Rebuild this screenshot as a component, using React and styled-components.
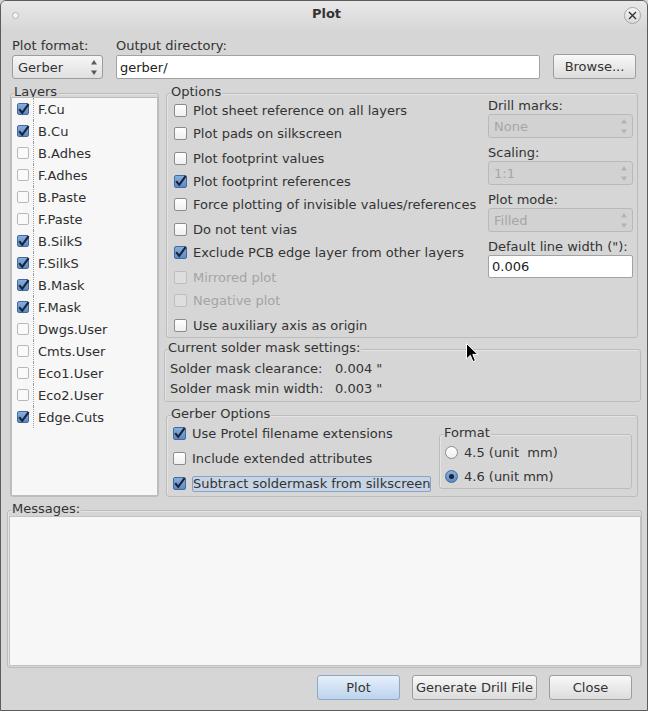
import React from 'react';
import styled, { createGlobalStyle, css } from 'styled-components';

const Global = createGlobalStyle`
  html, body { margin: 0; padding: 0; background: #d6d6d6; }
  body { font-family: "DejaVu Sans", "Noto Sans", sans-serif; font-size: 13px; color: #333; }
  * { box-sizing: border-box; }
`;

const Window = styled.div`
  position: relative;
  width: 648px;
  height: 711px;
  border: 1px solid #5c5c5c;
  border-radius: 6px 6px 0 0;
  background: #d6d6d6;
  display: flex;
  flex-direction: column;
  overflow: hidden;
`;

const TitleBar = styled.div`
  flex: none;
  height: 27px;
  display: grid;
  grid-template-columns: 1fr auto 1fr;
  align-items: center;
  padding: 0 6px 0 11px;
  background: linear-gradient(#e8e8e8, #d8d8d8);
`;

const WinDot = styled.span`
  width: 7px;
  height: 7px;
  border-radius: 50%;
  background: #f4f4f4;
  border: 1px solid #b4b4b4;
  margin-top: 2px;
`;

const Title = styled.div`
  font-weight: bold;
  font-size: 13px;
  color: #333;
  margin-top: -2px;
`;

const CloseBtn = styled.div`
  justify-self: end;
  width: 17px;
  height: 17px;
  border-radius: 50%;
  border: 1px solid #a6a6a6;
  background: linear-gradient(#f4f4f4, #dadada);
  display: flex;
  align-items: center;
  justify-content: center;
  margin-top: 1px;
`;

const Body = styled.div`
  flex: 1;
  display: flex;
  flex-direction: column;
  padding: 10px 5px 0 6px;
`;

const TopRow = styled.div`
  display: flex;
  align-items: flex-end;
  gap: 13px;
  margin-left: 5px;
`;

const Field = styled.div`
  display: flex;
  flex-direction: column;
  width: ${p => p.$w}px;
`;

const FieldLabel = styled.div`
  line-height: 15px;
  height: 15px;
  white-space: nowrap;
  margin-bottom: ${p => p.$mb ?? 2}px;
`;

const SelectBox = styled.div`
  height: 24px;
  display: flex;
  align-items: center;
  justify-content: space-between;
  padding: 0 5px 0 5px;
  border-radius: 3px;
  ${p => p.$disabled ? css`
    border: 1px solid #b9b9b9;
    background: #d2d2d2;
    color: #a6a6a6;
  ` : css`
    border: 1px solid #9c9c9c;
    background: linear-gradient(#f6f6f6, #e0e0e0);
    color: #333;
  `}
`;

const TextInput = styled.div`
  height: ${p => p.$h || 24}px;
  display: flex;
  align-items: center;
  padding-left: 3px;
  background: #fff;
  border: 1px solid #a2a2a2;
  border-radius: 2px;
  color: #222;
`;

const Button = styled.div`
  width: ${p => p.$w}px;
  height: 25px;
  display: flex;
  align-items: center;
  justify-content: center;
  border-radius: 3px;
  white-space: nowrap;
  color: #333;
  ${p => p.$primary ? css`
    border: 1px solid #8ea8c6;
    background: linear-gradient(#e6f0fb, #bcd3ec);
  ` : css`
    border: 1px solid #9d9d9d;
    background: linear-gradient(#f8f8f8, #dcdcdc);
  `}
`;

const MainRow = styled.div`
  display: flex;
  gap: 5px;
  margin-top: 14px;
  margin-left: 3px;
`;

const Group = styled.div`
  display: flex;
  flex-direction: column;
  border: 1px solid #bcbcbc;
  border-radius: 3px;
  box-shadow: inset 1px 1px 0 rgba(255,255,255,0.35);
`;

const GroupTitle = styled.div`
  align-self: flex-start;
  margin: -10px 0 0 ${p => p.$ml ?? 3}px;
  padding: 0 1px 0 0;
  line-height: 15px;
  height: 15px;
  background: #d6d6d6;
  white-space: nowrap;
`;

const LayersGroup = styled(Group)`
  width: 149px;
  padding: 0;
`;

const LayerList = styled.div`
  flex: 1;
  margin-top: -2px;
  background: #f7f7f7;
  border: 1px solid #bdbdbd;
  display: flex;
  flex-direction: column;
`;

const LayerRow = styled.div`
  height: 22px;
  display: flex;
  align-items: center;
  padding-left: 5px;
`;

const LayerText = styled.div`
  align-self: stretch;
  display: flex;
  align-items: center;
  margin-left: 4px;
  padding-left: 4px;
  border-left: 1px dotted #9c9c9c;
  color: #2e2e2e;
`;

const RightCol = styled.div`
  flex: 1;
  display: flex;
  flex-direction: column;
`;

const OptionsGroup = styled(Group)`
  margin: 0 4px 0 2px;
`;

const OptionsBody = styled.div`
  display: flex;
  justify-content: space-between;
  padding: 0 4px 0 7px;
`;

const CheckCol = styled.div`
  display: flex;
  flex-direction: column;
`;

const CheckRow = styled.div`
  height: ${p => p.$h || 23}px;
  margin-top: ${p => p.$mt || 0}px;
  display: flex;
  align-items: center;
  gap: 6px;
  white-space: nowrap;
  color: ${p => p.$disabled ? '#a4a4a4' : '#333'};
`;

const SettingsCol = styled.div`
  width: 145px;
  display: flex;
  flex-direction: column;
  margin-top: -1px;
`;

const SettingBlock = styled.div`
  display: flex;
  flex-direction: column;
  margin-top: ${p => p.$mt || 0}px;
`;

const Box = styled.span`
  flex: none;
  width: ${p => p.$size}px;
  height: ${p => p.$size}px;
  border-radius: 2px;
  display: inline-flex;
  align-items: center;
  justify-content: center;
  ${p => p.$checked ? css`
    border: 1px solid #44699a;
    background: linear-gradient(#86aedf, #5a8bca);
  ` : p.$disabled ? css`
    border: 1px solid #bdbdbd;
    background: #dedede;
  ` : p.$light ? css`
    border: 1px solid #b8b8b8;
    background: #fafafa;
  ` : css`
    border: 1px solid #8c8c8c;
    background: linear-gradient(#ffffff, #efefef);
  `}
  svg { overflow: visible; }
`;

const RadioDot = styled.span`
  flex: none;
  width: 13px;
  height: 13px;
  border-radius: 50%;
  display: inline-flex;
  align-items: center;
  justify-content: center;
  ${p => p.$checked ? css`
    border: 1px solid #44699a;
    background: linear-gradient(#86aedf, #5a8bca);
  ` : css`
    border: 1px solid #8c8c8c;
    background: linear-gradient(#ffffff, #efefef);
  `}
  &::after {
    content: '';
    display: ${p => p.$checked ? 'block' : 'none'};
    width: 5px;
    height: 5px;
    border-radius: 50%;
    background: #1d2530;
  }
`;

const FocusLabel = styled.span`
  background: #c6d4e4;
  border: 1px solid #88a3c5;
  border-radius: 2px;
  line-height: 14px;
`;

const SolderGroup = styled(Group)`
  margin: 11px 1px 0 0;
  padding-bottom: 3px;
`;

const SolderRow = styled.div`
  height: 20px;
  display: flex;
  align-items: center;
  padding-left: 5px;
  margin-top: ${p => p.$mt || 0}px;
`;

const SolderKey = styled.span`
  width: 165px;
`;

const GerberGroup = styled(Group)`
  margin: 13px 4px 0 2px;
`;

const GerberBody = styled.div`
  display: flex;
  justify-content: space-between;
  align-items: flex-start;
  padding: 0 5px 0 6px;
`;

const FormatGroup = styled(Group)`
  width: 193px;
  margin-top: 13px;
  padding-left: 5px;
`;

const RadioRow = styled.div`
  height: 24px;
  display: flex;
  align-items: center;
  gap: 6px;
  white-space: pre;
`;

const MessagesGroup = styled(Group)`
  margin-top: 13px;
  padding: 0 0 1px 1px;
`;

const MessagesArea = styled.div`
  height: 150px;
  background: #f7f7f7;
  border: 1px solid #c2c2c2;
`;

const ButtonRow = styled.div`
  display: flex;
  justify-content: flex-end;
  gap: 12px;
  margin-top: 7px;
  padding-right: 10px;
`;

const Cursor = styled.svg`
  position: absolute;
  left: 465px;
  top: 342px;
`;

const Check = () => (
  <svg width="11" height="11" viewBox="0 0 11 11">
    <path d="M1.2 5.2 L4.2 8.8 L10.6 0.2" fill="none" stroke="#1c2431" strokeWidth="2.1" />
  </svg>
);

const Arrows = ({ disabled }) => (
  <svg width="6" height="15" viewBox="0 0 6 15">
    <polygon points="0,4.5 3,0 6,4.5" fill={disabled ? '#b3b3b3' : '#5a5a5a'} />
    <polygon points="0,10.5 3,15 6,10.5" fill={disabled ? '#b3b3b3' : '#5a5a5a'} />
  </svg>
);

const CheckBox = ({ checked, disabled, size = 13, light }) => (
  <Box $size={size} $checked={checked} $disabled={disabled} $light={light}>
    {checked && <Check />}
  </Box>
);

const layers = [
  ['F.Cu', true], ['B.Cu', true], ['B.Adhes', false], ['F.Adhes', false],
  ['B.Paste', false], ['F.Paste', false], ['B.SilkS', true], ['F.SilkS', true],
  ['B.Mask', true], ['F.Mask', true], ['Dwgs.User', false], ['Cmts.User', false],
  ['Eco1.User', false], ['Eco2.User', false], ['Edge.Cuts', true],
];

const options = [
  { label: 'Plot sheet reference on all layers' },
  { label: 'Plot pads on silkscreen' },
  { label: 'Plot footprint values', mt: 2 },
  { label: 'Plot footprint references', checked: true },
  { label: 'Force plotting of invisible values/references' },
  { label: 'Do not tent vias', mt: 2 },
  { label: 'Exclude PCB edge layer from other layers', checked: true },
  { label: 'Mirrored plot', disabled: true, mt: 2 },
  { label: 'Negative plot', disabled: true },
  { label: 'Use auxiliary axis as origin', mt: 2 },
];

const settings = [
  { label: 'Drill marks:', value: 'None' },
  { label: 'Scaling:', value: '1:1' },
  { label: 'Plot mode:', value: 'Filled' },
];

export default function App() {
  return (
    <>
      <Global />
      <Window>
        <TitleBar>
          <WinDot />
          <Title>Plot</Title>
          <CloseBtn>
            <svg width="9" height="9" viewBox="0 0 9 9">
              <path d="M1 1 L8 8 M8 1 L1 8" stroke="#333" strokeWidth="1.4" />
            </svg>
          </CloseBtn>
        </TitleBar>
        <Body>
          <TopRow>
            <Field $w={91}>
              <FieldLabel>Plot format:</FieldLabel>
              <SelectBox>
                <span>Gerber</span>
                <Arrows />
              </SelectBox>
            </Field>
            <Field $w={424}>
              <FieldLabel>Output directory:</FieldLabel>
              <TextInput>gerber/</TextInput>
            </Field>
            <Button $w={83}>Browse...</Button>
          </TopRow>

          <MainRow>
            <LayersGroup>
              <GroupTitle>Layers</GroupTitle>
              <LayerList>
                {layers.map(([name, on]) => (
                  <LayerRow key={name}>
                    <CheckBox checked={on} size={12} light />
                    <LayerText>{name}</LayerText>
                  </LayerRow>
                ))}
              </LayerList>
            </LayersGroup>

            <RightCol>
              <OptionsGroup>
                <GroupTitle $ml={4}>Options</GroupTitle>
                <OptionsBody>
                  <CheckCol>
                    {options.map(o => (
                      <CheckRow key={o.label} $mt={o.mt} $disabled={o.disabled}>
                        <CheckBox checked={o.checked} disabled={o.disabled} />
                        <span>{o.label}</span>
                      </CheckRow>
                    ))}
                  </CheckCol>
                  <SettingsCol>
                    {settings.map((s, i) => (
                      <SettingBlock key={s.label} $mt={i ? 7 : 0}>
                        <FieldLabel $mb={1}>{s.label}</FieldLabel>
                        <SelectBox $disabled>
                          <span>{s.value}</span>
                          <Arrows disabled />
                        </SelectBox>
                      </SettingBlock>
                    ))}
                    <SettingBlock $mt={7}>
                      <FieldLabel $mb={1}>Default line width ("):</FieldLabel>
                      <TextInput $h={23}>0.006</TextInput>
                    </SettingBlock>
                  </SettingsCol>
                </OptionsBody>
              </OptionsGroup>

              <SolderGroup>
                <GroupTitle>Current solder mask settings:</GroupTitle>
                <SolderRow $mt={3}>
                  <SolderKey>Solder mask clearance:</SolderKey>
                  <span>0.004 "</span>
                </SolderRow>
                <SolderRow>
                  <SolderKey>Solder mask min width:</SolderKey>
                  <span>0.003 "</span>
                </SolderRow>
              </SolderGroup>

              <GerberGroup>
                <GroupTitle $ml={4}>Gerber Options</GroupTitle>
                <GerberBody>
                  <CheckCol>
                    <CheckRow $h={25}>
                      <CheckBox checked />
                      <span>Use Protel filename extensions</span>
                    </CheckRow>
                    <CheckRow $h={25}>
                      <CheckBox />
                      <span>Include extended attributes</span>
                    </CheckRow>
                    <CheckRow $h={25}>
                      <CheckBox checked />
                      <FocusLabel>Subtract soldermask from silkscreen</FocusLabel>
                    </CheckRow>
                  </CheckCol>
                  <FormatGroup>
                    <GroupTitle $ml={-1}>Format</GroupTitle>
                    <RadioRow>
                      <RadioDot />
                      <span>4.5 (unit  mm)</span>
                    </RadioRow>
                    <RadioRow>
                      <RadioDot $checked />
                      <span>4.6 (unit mm)</span>
                    </RadioRow>
                  </FormatGroup>
                </GerberBody>
              </GerberGroup>
            </RightCol>
          </MainRow>

          <MessagesGroup>
            <GroupTitle $ml={3}>Messages:</GroupTitle>
            <MessagesArea />
          </MessagesGroup>

          <ButtonRow>
            <Button $w={83} $primary>Plot</Button>
            <Button $w={125}>Generate Drill File</Button>
            <Button $w={83}>Close</Button>
          </ButtonRow>
        </Body>
        <Cursor width="13" height="20" viewBox="0 0 13 20">
          <path d="M0.5 0.5 L0.5 16 L4.3 12.3 L7 18.6 L9.4 17.6 L6.8 11.4 L11.8 11.4 Z" fill="#000" stroke="#fff" strokeWidth="1" />
        </Cursor>
      </Window>
    </>
  );
}
